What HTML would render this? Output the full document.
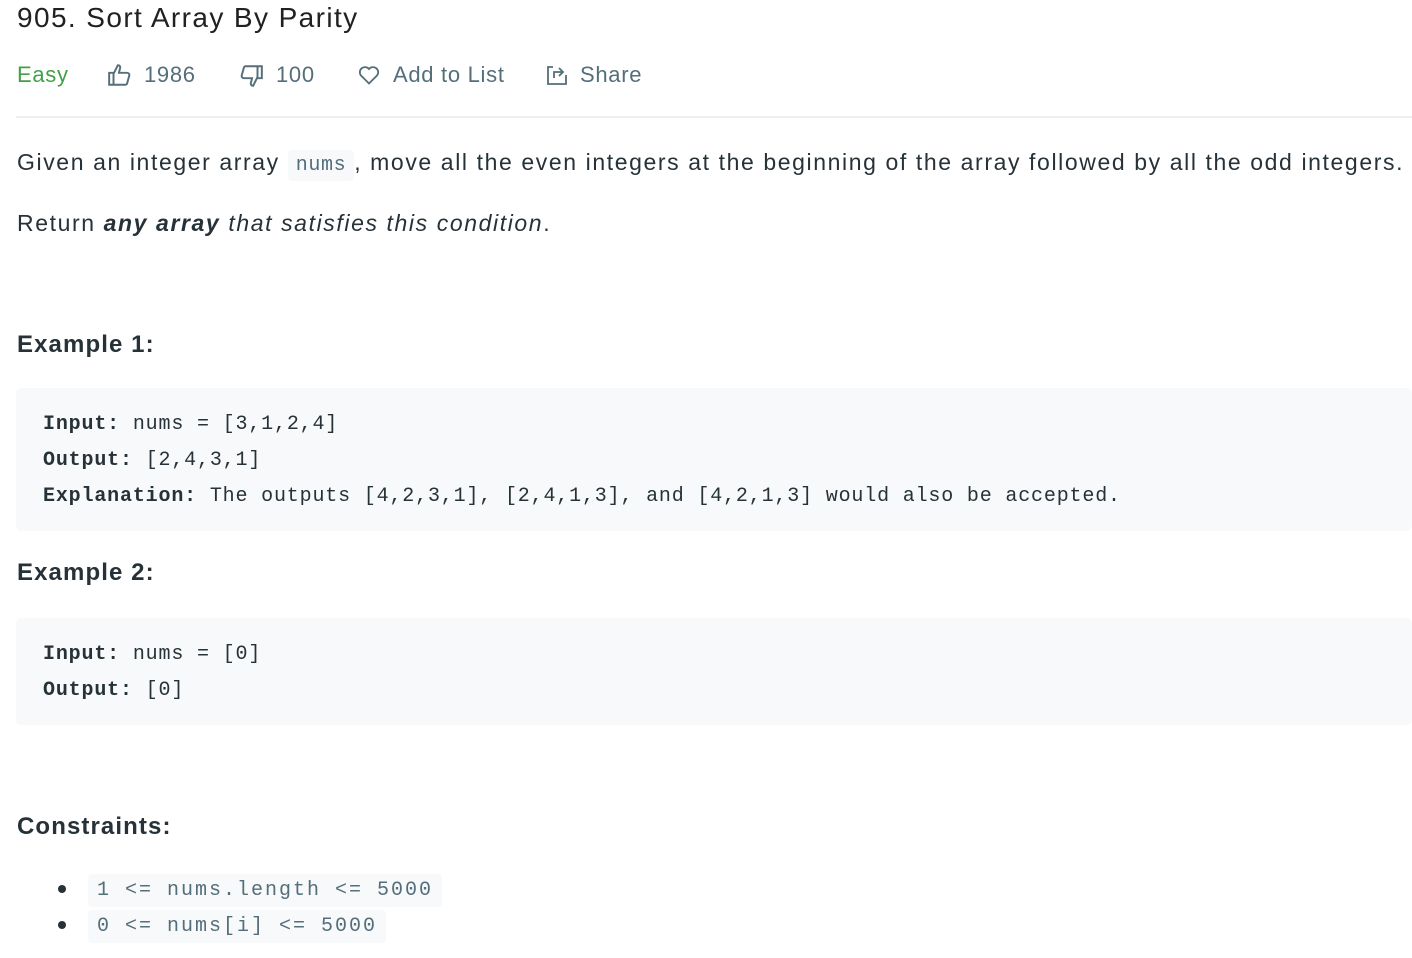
<!DOCTYPE html>
<html><head><meta charset="utf-8"><style>
body{margin:0;width:1412px;height:958px;background:#fff;font-family:"Liberation Sans",sans-serif;color:#263238;position:relative;overflow:hidden}
.a{position:absolute;white-space:nowrap}
.t{left:17px;top:0px;font-size:28px;line-height:36px;color:#212121;letter-spacing:1.4px}
.meta{top:60px;font-size:22px;line-height:30px;color:#546e7a;letter-spacing:.7px}
.p{left:17px;font-size:23px;line-height:32px;letter-spacing:1.6px}
h3{margin:0;position:absolute;left:17px;font-size:24px;font-weight:bold;line-height:32px;letter-spacing:1.1px}
.pre{position:absolute;left:16px;width:1396px;background:#f7f9fa;border-radius:5px}
.m{font-family:"Liberation Mono",monospace;font-size:20px;letter-spacing:.83px;line-height:36px;position:absolute;left:27px;white-space:pre}
.m b{font-weight:bold}
.c{font-family:"Liberation Mono",monospace;background:#f7f9fa;color:#546e7a;border-radius:4px;letter-spacing:0}
.dot{position:absolute;left:58px;width:8px;height:8px;border-radius:50%;background:#263238}
</style></head><body>
<div class="a t">905. Sort Array By Parity</div>
<div class="a meta" style="left:17px;color:#43a047">Easy</div>
<svg class="a" style="left:107px;top:62px" width="26" height="26" viewBox="0 0 24 24" fill="none" stroke="#546e7a" stroke-width="1.8"><path d="M2 10h4v11H2zM6 11l4-8c2 0 2.5 1.5 2 3l-1 4h7.5c1.5 0 2.5 1.3 2 2.7L18.5 20c-.3.7-1 1-1.8 1H6"/></svg>
<div class="a meta" style="left:144px">1986</div>
<svg class="a" style="left:238px;top:63px" width="26" height="26" viewBox="0 0 24 24" fill="none" stroke="#546e7a" stroke-width="1.8"><path d="M22 14h-4V3h4zM18 13l-4 8c-2 0-2.5-1.5-2-3l1-4H5.5c-1.5 0-2.5-1.3-2-2.7L5.5 4c.3-.7 1-1 1.8-1H18"/></svg>
<div class="a meta" style="left:276px">100</div>
<svg class="a" style="left:357px;top:63px" width="24" height="24" viewBox="0 0 24 24" fill="none" stroke="#546e7a" stroke-width="1.8"><path d="M12 20.5l-8-8A5 5 0 0 1 12 6a5 5 0 0 1 8 6.5z"/></svg>
<div class="a meta" style="left:393px">Add to List</div>
<svg class="a" style="left:544px;top:63px" width="26" height="24" viewBox="0 0 24 24" fill="none" stroke="#546e7a" stroke-width="1.8"><path d="M8 4H3v17h18V12M9 15V9h8M14 5l4 4-4 4"/></svg>
<div class="a meta" style="left:580px">Share</div>
<div class="a" style="left:16px;top:116px;width:1396px;height:2px;background:#eee"></div>
<div class="a p" style="top:146px">Given an integer array <span class="c" style="font-size:20px;padding:4px 8px;letter-spacing:.6px">nums</span>, move all the even integers at the beginning of the array followed by all the odd integers.</div>
<div class="a p" style="top:207px">Return <b><i>any array</i></b> <i>that satisfies this condition</i>.</div>
<h3 style="top:329px">Example 1:</h3>
<div class="pre" style="top:388px;height:143px">
<div class="m" style="top:19px"><b>Input:</b> nums = [3,1,2,4]
<b>Output:</b> [2,4,3,1]
<b>Explanation:</b> The outputs [4,2,3,1], [2,4,1,3], and [4,2,1,3] would also be accepted.</div></div>
<h3 style="top:557px">Example 2:</h3>
<div class="pre" style="top:618px;height:107px">
<div class="m" style="top:19px"><b>Input:</b> nums = [0]
<b>Output:</b> [0]</div></div>
<h3 style="top:811px">Constraints:</h3>
<div class="dot" style="top:885px"></div>
<div class="dot" style="top:921px"></div>
<div class="a c" style="left:88px;top:874px;height:33px;line-height:33px;padding:0 9px;font-size:20px;letter-spacing:2px">1 &lt;= nums.length &lt;= 5000</div>
<div class="a c" style="left:88px;top:910px;height:33px;line-height:33px;padding:0 9px;font-size:20px;letter-spacing:2px">0 &lt;= nums[i] &lt;= 5000</div>
</body></html>
